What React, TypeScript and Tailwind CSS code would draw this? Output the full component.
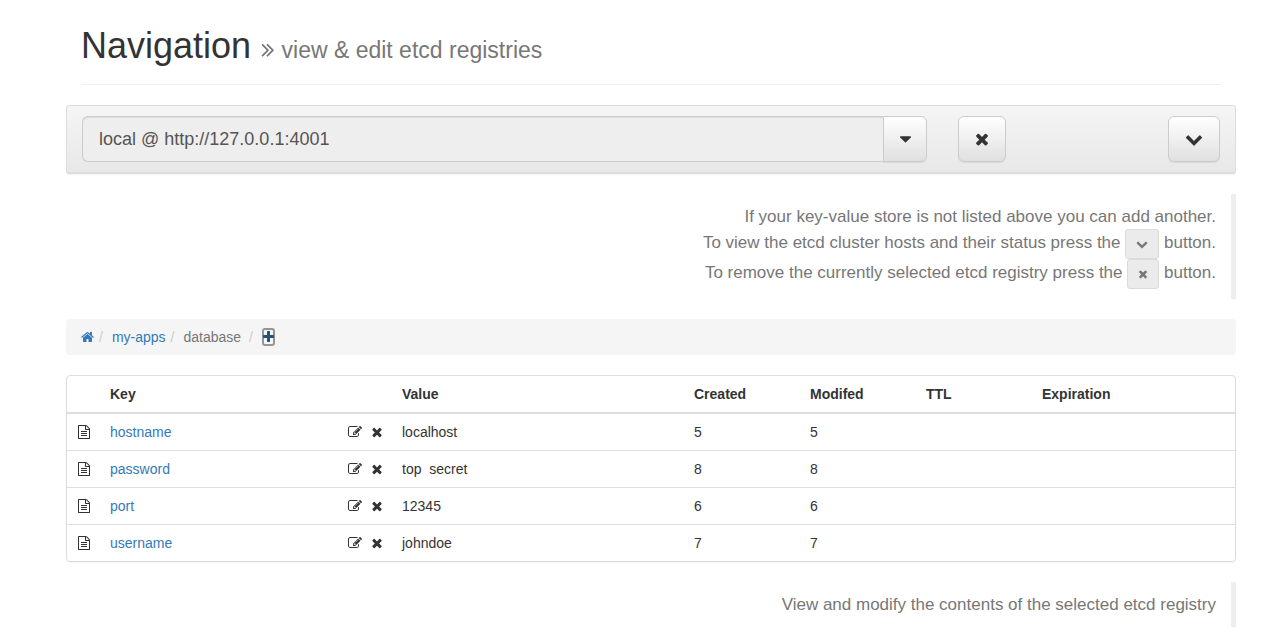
import React from "react";

type Glyph = { box: string; d: string };

const glyphs = {
  times: {
    box: "192 0 1408 1792",
    d: "M1490 1322q0 40-28 68l-136 136q-28 28-68 28t-68-28l-294-294-294 294q-28 28-68 28t-68-28l-136-136q-28-28-28-68t28-68l294-294-294-294q-28-28-28-68t28-68l136-136q28-28 68-28t68 28l294 294 294-294q28-28 68-28t68 28l136 136q28 28 28 68t-28 68l-294 294 294 294q28 28 28 68z",
  },
  chevronDown: {
    box: "0 0 1792 1792",
    d: "M1683 808l-742 741q-19 19-45 19t-45-19l-742-741q-19-19-19-45.5t19-45.5l166-165q19-19 45-19t45 19l531 531 531-531q19-19 45-19t45 19l166 165q19 19 19 45.5t-19 45.5z",
  },
  caretDown: {
    box: "384 0 1024 1792",
    d: "M1408 704q0 26-19 45l-448 448q-19 19-45 19t-45-19l-448-448q-19-19-19-45t19-45 45-19h896q26 0 45 19t19 45z",
  },
  plus: {
    box: "192 0 1408 1792",
    d: "M1600 736v192q0 40-28 68t-68 28h-416v416q0 40-28 68t-68 28h-192q-40 0-68-28t-28-68v-416h-416q-40 0-68-28t-28-68v-192q0-40 28-68t68-28h416v-416q0-40 28-68t68-28h192q40 0 68 28t28 68v416h416q40 0 68 28t28 68z",
  },
  home: {
    box: "64 0 1664 1792",
    d: "M1472 992v480q0 26-19 45t-45 19h-384v-384h-256v384h-384q-26 0-45-19t-19-45v-480q0-1 .5-3t.5-3l575-474 575 474q1 2 1 6zm223-69l-62 74q-8 9-21 11h-3q-13 0-21-7l-692-577-692 577q-12 8-24 7-13-2-21-11l-62-74q-8-10-7-23.5t11-21.5l719-599q32-26 76-26t76 26l244 204v-195q0-14 9-23t23-9h192q14 0 23 9t9 23v408l219 182q10 8 11 21.5t-7 23.5z",
  },
  fileText: {
    box: "128 0 1536 1792",
    d: "M1596 380q28 28 48 76t20 88v1152q0 40-28 68t-68 28h-1344q-40 0-68-28t-28-68v-1600q0-40 28-68t68-28h896q40 0 88 20t76 48zm-444-244v376h376q-10-29-22-41l-313-313q-12-12-41-22zm384 1528v-1024h-416q-40 0-68-28t-28-68v-416h-768v1536h1280zm-1024-864q0-14 9-23t23-9h704q14 0 23 9t9 23v64q0 14-9 23t-23 9h-704q-14 0-23-9t-9-23v-64zm736 224q14 0 23 9t9 23v64q0 14-9 23t-23 9h-704q-14 0-23-9t-9-23v-64q0-14 9-23t23-9h704zm0 256q14 0 23 9t9 23v64q0 14-9 23t-23 9h-704q-14 0-23-9t-9-23v-64q0-14 9-23t23-9h704z",
  },
  edit: {
    box: "0 0 1792 1792",
    d: "M888 1184l116-116-152-152-116 116v56h96v96h56zm440-720q-16-16-33 1l-350 350q-17 17-1 33t33-1l350-350q17-17 1-33zm80 594v190q0 119-84.5 203.5t-203.5 84.5h-832q-119 0-203.5-84.5t-84.5-203.5v-832q0-119 84.5-203.5t203.5-84.5h832q63 0 117 25 15 7 18 23 3 17-9 29l-49 49q-14 14-32 8-23-6-45-6h-832q-66 0-113 47t-47 113v832q0 66 47 113t113 47h832q66 0 113-47t47-113v-126q0-13 9-22l64-64q15-15 35-7t20 29zm-96-738l288 288-672 672h-288v-288zm444 132l-92 92-288-288 92-92q28-28 68-28t68 28l152 152q28 28 28 68t-28 68z",
  },
  angles: {
    box: "384 0 1024 1792",
    d: "M979 960q0 13-10 23l-466 466q-10 10-23 10t-23-10l-50-50q-10-10-10-23t10-23l393-393-393-393q-10-10-10-23t10-23l50-50q10-10 23-10t23 10l466 466q10 10 10 23zm384 0q0 13-10 23l-466 466q-10 10-23 10t-23-10l-50-50q-10-10-10-23t10-23l393-393-393-393q-10-10-10-23t10-23l50-50q10-10 23-10t23 10l466 466q10 10 10 23z",
  },
} satisfies Record<string, Glyph>;

function Icon({ name, className }: { name: keyof typeof glyphs; className: string }) {
  const glyph = glyphs[name];
  return (
    <svg viewBox={glyph.box} className={`inline-block fill-current ${className}`} aria-hidden="true">
      <path d={glyph.d} />
    </svg>
  );
}

const buttonLook =
  "flex h-[46px] items-center justify-center border border-[#ccc] bg-linear-to-b from-white to-[#e0e0e0] text-[#333] shadow-[inset_0_1px_0_rgba(255,255,255,0.15),0_1px_1px_rgba(0,0,0,0.075)]";

const keyLook =
  "inline-flex h-[30px] items-center justify-center rounded-[3px] border border-[#dbdbdb] bg-[#ebebeb] align-top";

const rows = [
  { key: "hostname", value: "localhost", created: 5, modified: 5 },
  { key: "password", value: "top  secret", created: 8, modified: 8 },
  { key: "port", value: "12345", created: 6, modified: 6 },
  { key: "username", value: "johndoe", created: 7, modified: 7 },
];

function Note({ children }: { children: React.ReactNode }) {
  return (
    <aside className="mb-5 border-r-[5px] border-[#eee] py-[10px] pr-[15px] text-right text-[17px] leading-[25px] text-[#777]">
      {children}
    </aside>
  );
}

export default function App() {
  return (
    <main className="bg-white pr-[43px] pl-[66px] font-['Liberation_Sans',Arial,sans-serif] text-[14px] leading-5 text-[#333]">
      <header className="mx-[15px] border-b border-[#eee] pt-[26px] pb-[19px]">
        <h1 className="text-[36px] leading-[39px] font-medium">
          Navigation{" "}
          <small className="text-[23px] leading-none font-normal text-[#777]">
            <Icon name="angles" className="h-[23px] w-[14px] align-[-3px]" /> view &amp; edit etcd registries
          </small>
        </h1>
      </header>

      <section className="mt-5 mb-5 flex rounded-[3px] border border-b-2 border-[#ddd] bg-linear-to-b from-[#f5f5f5] to-[#e8e8e8] px-[15px] py-[10px] shadow-[0_1px_1px_rgba(0,0,0,0.05)]">
        <div className="flex min-w-0 flex-1">
          <input
            type="text"
            readOnly
            aria-label="Selected registry"
            value="local @ http://127.0.0.1:4001"
            className="h-[46px] min-w-0 flex-1 rounded-l-md border border-r-0 border-[#ccc] bg-[#eee] px-4 text-[18px] text-[#555] shadow-[inset_0_1px_1px_rgba(0,0,0,0.075)] outline-none"
          />
          <button type="button" aria-label="Choose registry" className={`${buttonLook} w-11 rounded-r-md`}>
            <Icon name="caretDown" className="h-5 w-[11px]" />
          </button>
        </div>
        <button type="button" aria-label="Remove registry" className={`${buttonLook} ml-[31px] w-12 rounded-md`}>
          <Icon name="times" className="h-[18px] w-[14px]" />
        </button>
        <button type="button" aria-label="Show cluster hosts" className={`${buttonLook} ml-[162px] w-[52px] rounded-md`}>
          <Icon name="chevronDown" className="size-[18px]" />
        </button>
      </section>

      <Note>
        <p>If your key-value store is not listed above you can add another.</p>
        <p className="leading-[27px]">
          To view the etcd cluster hosts and their status press the{" "}
          <span className={`${keyLook} w-[34px]`}>
            <Icon name="chevronDown" className="size-3" />
          </span>{" "}
          button.
        </p>
        <p className="leading-[27px]">
          To remove the currently selected etcd registry press the{" "}
          <span className={`${keyLook} w-8`}>
            <Icon name="times" className="h-3 w-[10px]" />
          </span>{" "}
          button.
        </p>
      </Note>

      <nav aria-label="Breadcrumb" className="mb-5 rounded bg-[#f5f5f5] px-[15px] py-2">
        <ol className="flex items-center">
          <li>
            <a href="#home" aria-label="Home" className="text-[#337ab7]">
              <Icon name="home" className="h-[14px] w-[13px] align-[-2px]" />
            </a>
          </li>
          <li className="ml-[5px] text-[#ccc]" aria-hidden="true">/</li>
          <li className="ml-[9px]">
            <a href="#my-apps" className="text-[#337ab7]">my-apps</a>
          </li>
          <li className="ml-[5px] text-[#ccc]" aria-hidden="true">/</li>
          <li className="ml-[9px] text-[#777]">database</li>
          <li className="ml-2 text-[#ccc]" aria-hidden="true">/</li>
          <li className="ml-[9px] flex">
            <a
              href="#add"
              aria-label="Add key"
              className="flex h-[18px] w-[13px] items-center justify-center rounded-[3px] border-2 border-[#959595] text-[#23527c]"
            >
              <Icon name="plus" className="h-[14px] w-[11px] shrink-0" />
            </a>
          </li>
        </ol>
      </nav>

      <section className="mb-5 overflow-hidden rounded border border-[#ddd] shadow-[0_1px_2px_rgba(0,0,0,0.05)]">
        <table className="w-full table-fixed border-collapse text-left">
          <colgroup>
            <col className="w-[35px]" />
            <col className="w-[25%]" />
            <col className="w-[25%]" />
            <col className="w-[116px]" />
            <col className="w-[116px]" />
            <col className="w-[116px]" />
            <col />
          </colgroup>
          <thead>
            <tr className="border-b-2 border-[#ddd]">
              <td />
              {["Key", "Value", "Created", "Modifed", "TTL", "Expiration"].map((title) => (
                <th key={title} scope="col" className="p-2 font-bold">
                  {title}
                </th>
              ))}
            </tr>
          </thead>
          <tbody>
            {rows.map((row) => (
              <tr key={row.key} className="border-t border-[#ddd]">
                <td className="py-2 pl-[11px]">
                  <Icon name="fileText" className="h-[14px] w-3 align-[-2px]" />
                </td>
                <td className="p-2">
                  <div className="flex items-center justify-between">
                    <a href={`#${row.key}`} className="text-[#337ab7]">{row.key}</a>
                    <span className="flex gap-1">
                      <button type="button" aria-label={`Edit ${row.key}`} className="flex w-[18px] justify-center">
                        <Icon name="edit" className="size-[14px]" />
                      </button>
                      <button type="button" aria-label={`Delete ${row.key}`} className="flex w-[18px] justify-center">
                        <Icon name="times" className="h-[14px] w-3" />
                      </button>
                    </span>
                  </div>
                </td>
                <td className="p-2 whitespace-pre">{row.value}</td>
                <td className="p-2">{row.created}</td>
                <td className="p-2">{row.modified}</td>
                <td className="p-2" />
                <td className="p-2" />
              </tr>
            ))}
          </tbody>
        </table>
      </section>

      <Note>
        <p>View and modify the contents of the selected etcd registry</p>
      </Note>
    </main>
  );
}
